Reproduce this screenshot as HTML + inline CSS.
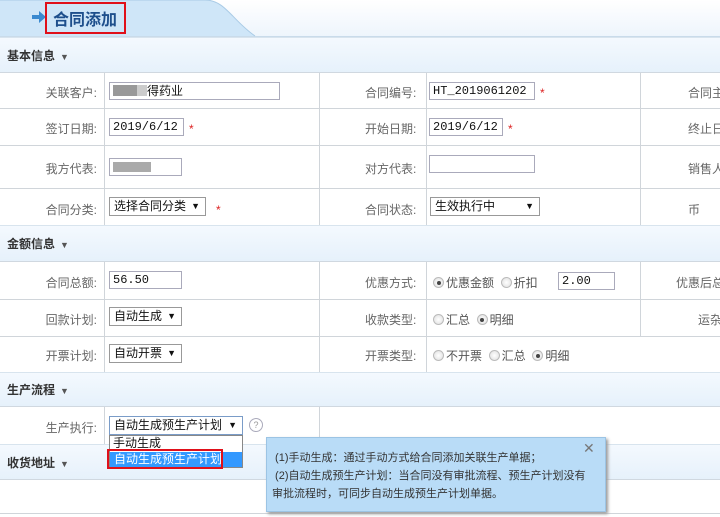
<!DOCTYPE html>
<html><head><meta charset="utf-8"><style>
*{margin:0;padding:0;box-sizing:border-box;white-space:nowrap}
body{width:720px;height:517px;overflow:hidden;background:#fff;font-family:"Liberation Sans","Noto Sans CJK SC",sans-serif;font-size:12px;color:#333;position:relative}
.a{position:absolute}
.sec{position:absolute;left:0;width:720px;background:linear-gradient(#f4f9fe,#e6f1fb);border-top:1px solid #d8e4ee;border-bottom:1px solid #d0d8e0;font-weight:bold;color:#333;padding-left:7px;font-size:12px}
.sec i{font-style:normal;font-size:9px;color:#555;margin-left:5px;font-weight:normal}
.hl{position:absolute;left:0;width:720px;height:1px;background:#d0d5da}
.vl{position:absolute;width:1px;background:#d0d5da}
.lb{position:absolute;color:#666;text-align:right;width:97px}
.lb2{position:absolute;color:#666;left:365px}
.lb3{position:absolute;color:#666}
.in{position:absolute;border:1px solid #aab;background:#fff;height:18px;font-family:"Liberation Mono","Noto Sans CJK SC",monospace;font-size:12px;line-height:16px;padding-left:3px;color:#111}
.sel{position:absolute;border:1px solid #999;background:#fff;height:19px;line-height:17px;padding-left:4px;color:#111;font-size:12px}
.sel b{position:absolute;right:5px;font-size:9px;top:0}
.st{position:absolute;color:#d22;font-size:12px}
.r{display:inline-block;width:11px;height:11px;border-radius:50%;border:1px solid #bbb;background:radial-gradient(#fff,#ddd);vertical-align:-1px;margin-right:2px;position:relative}
.r.on::after{content:"";position:absolute;left:2.5px;top:2.5px;width:4px;height:4px;border-radius:50%;background:#444}
.rg{position:absolute;color:#555}
</style></head><body>
<div class="a" style="left:0;top:0;width:720px;height:37px;background:linear-gradient(#fff,#eef5fc);border-bottom:1px solid #c9dbea"></div>
<svg class="a" style="left:0;top:0" width="260" height="37"><path d="M0 0H205C225 0 232 20 255 36H0Z" fill="#cfe6f8"/><path d="M0 0H205C225 0 232 20 255 36" fill="none" stroke="#a9cbe6"/></svg>
<div class="a" style="left:34px;top:11px;width:0;height:0;border-left:7px solid #3a8ad0;border-top:6px solid transparent;border-bottom:6px solid transparent;margin-left:5px"></div>
<div class="a" style="left:32px;top:15px;width:8px;height:4px;background:#3a8ad0"></div>
<div class="a" style="left:45px;top:2px;width:81px;height:32px;border:2px solid #e0101a"></div>
<div class="a" style="left:53px;top:6px;font-size:16px;font-weight:bold;color:#1e4f8c">合同添加</div>

<div class="sec" style="top:37px;height:36px;line-height:36px">基本信息<i>▼</i></div>
<div class="vl" style="left:104px;top:73px;height:152px"></div><div class="vl" style="left:319px;top:73px;height:152px"></div><div class="vl" style="left:426px;top:73px;height:152px"></div><div class="vl" style="left:640px;top:73px;height:152px"></div>
<div class="hl" style="top:108px"></div><div class="hl" style="top:145px"></div><div class="hl" style="top:188px"></div>
<div class="lb" style="left:0;top:84px">关联客户:</div>
<div class="in" style="left:109px;top:82px;width:171px;font-family:'Liberation Sans','Noto Sans CJK SC',sans-serif"><span style="display:inline-block;width:24px;height:11px;background:#999;vertical-align:-1px"></span><span style="display:inline-block;width:10px;height:11px;background:#ccc;vertical-align:-1px"></span>得药业</div>
<div class="lb2" style="top:84px">合同编号:</div>
<div class="in" style="left:429px;top:82px;width:106px">HT_2019061202</div><div class="st" style="left:540px;top:86px">*</div>
<div class="lb3" style="left:688px;top:84px">合同主</div>
<div class="lb" style="left:0;top:120px">签订日期:</div>
<div class="in" style="left:109px;top:118px;width:75px">2019/6/12</div><div class="st" style="left:189px;top:122px">*</div>
<div class="lb2" style="top:120px">开始日期:</div>
<div class="in" style="left:429px;top:118px;width:74px">2019/6/12</div><div class="st" style="left:508px;top:122px">*</div>
<div class="lb3" style="left:688px;top:120px">终止日</div>
<div class="lb" style="left:0;top:160px">我方代表:</div>
<div class="in" style="left:109px;top:158px;width:73px"><span style="display:inline-block;width:38px;height:10px;background:#aaa;margin-top:3px"></span></div>
<div class="lb2" style="top:160px">对方代表:</div>
<div class="in" style="left:429px;top:155px;width:106px"></div>
<div class="lb3" style="left:688px;top:160px">销售人</div>
<div class="lb" style="left:0;top:201px">合同分类:</div>
<div class="sel" style="left:109px;top:197px;width:97px">选择合同分类<b>▼</b></div><div class="st" style="left:216px;top:203px">*</div>
<div class="lb2" style="top:201px">合同状态:</div>
<div class="sel" style="left:430px;top:197px;width:110px">生效执行中<b>▼</b></div>
<div class="lb3" style="left:688px;top:201px">币</div>

<div class="sec" style="top:225px;height:37px;line-height:36px">金额信息<i>▼</i></div>
<div class="vl" style="left:104px;top:262px;height:110px"></div><div class="vl" style="left:319px;top:262px;height:110px"></div><div class="vl" style="left:426px;top:262px;height:110px"></div><div class="vl" style="left:640px;top:262px;height:74px"></div>
<div class="hl" style="top:299px"></div><div class="hl" style="top:336px"></div>
<div class="lb" style="left:0;top:274px">合同总额:</div>
<div class="in" style="left:109px;top:271px;width:73px">56.50</div>
<div class="lb2" style="top:274px">优惠方式:</div>
<div class="rg" style="left:433px;top:274px"><span class="r on"></span>优惠金额 &nbsp;<span class="r"></span>折扣</div>
<div class="in" style="left:558px;top:272px;width:57px">2.00</div>
<div class="lb3" style="left:676px;top:274px">优惠后总</div>
<div class="lb" style="left:0;top:311px">回款计划:</div>
<div class="sel" style="left:109px;top:307px;width:73px">自动生成<b>▼</b></div>
<div class="lb2" style="top:311px">收款类型:</div>
<div class="rg" style="left:433px;top:311px"><span class="r"></span>汇总 &nbsp;<span class="r on"></span>明细</div>
<div class="lb3" style="left:698px;top:311px">运杂</div>
<div class="lb" style="left:0;top:347px">开票计划:</div>
<div class="sel" style="left:109px;top:344px;width:73px">自动开票<b>▼</b></div>
<div class="lb2" style="top:347px">开票类型:</div>
<div class="rg" style="left:433px;top:347px"><span class="r"></span>不开票 &nbsp;<span class="r"></span>汇总 &nbsp;<span class="r on"></span>明细</div>

<div class="sec" style="top:372px;height:35px;line-height:34px">生产流程<i>▼</i></div>
<div class="vl" style="left:104px;top:407px;height:37px"></div><div class="vl" style="left:319px;top:407px;height:37px"></div>
<div class="lb" style="left:0;top:419px">生产执行:</div>
<div class="sel" style="left:109px;top:416px;width:134px;border-color:#7a9cc8">自动生成预生产计划<b>▼</b></div>
<div class="a" style="left:249px;top:418px;width:14px;height:14px;border:1px solid #aab;border-radius:50%;font-size:9px;color:#999;text-align:center;line-height:12px">?</div>
<div class="sec" style="top:444px;height:36px;line-height:36px">收货地址<i>▼</i></div>
<div class="hl" style="top:513px"></div>
<div class="a" style="left:109px;top:435px;width:134px;height:33px;border:1px solid #888;background:#fff"></div>
<div class="a" style="left:113px;top:435px;color:#111;line-height:16px">手动生成</div>
<div class="a" style="left:110px;top:452px;width:132px;height:15px;background:#3399ff"></div>
<div class="a" style="left:107px;top:449px;width:116px;height:20px;border:2px solid #e0101a"></div>
<div class="a" style="left:114px;top:452px;color:#fff;line-height:15px">自动生成预生产计划</div>

<div class="a" style="left:266px;top:437px;width:340px;height:75px;background:#b9dcf7;border:1px solid #9cc4e4;box-shadow:2px 2px 3px #999"></div>
<div class="a" style="left:583px;top:440px;color:#777;font-size:14px">✕</div>
<div class="a" style="left:272px;top:449px;font-size:11px;line-height:18px;color:#333;width:330px">
<div>&nbsp;(1)手动生成：通过手动方式给合同添加关联生产单据；</div>
<div>&nbsp;(2)自动生成预生产计划：当合同没有审批流程、预生产计划没有</div>
<div>审批流程时，可同步自动生成预生产计划单据。</div></div>
</body></html>
